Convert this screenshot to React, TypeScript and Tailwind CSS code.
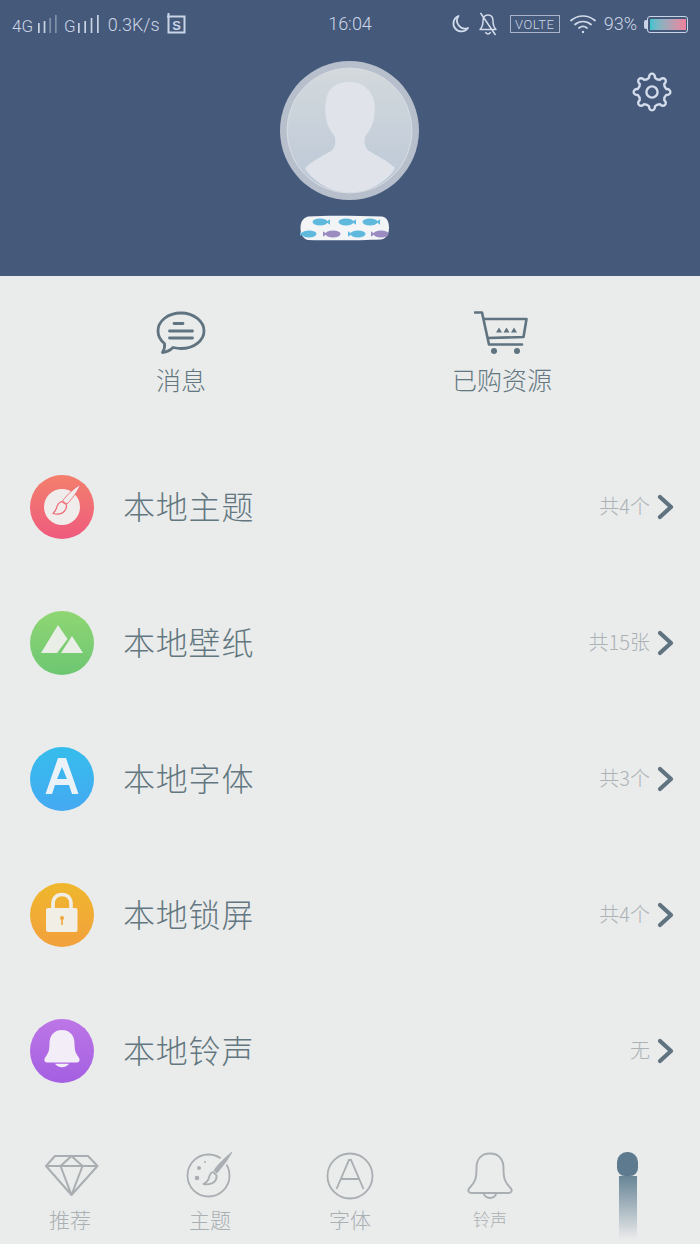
import type { ReactNode } from "react"

const CJK = "font-['Noto_Sans_CJK_SC','Noto_Sans',sans-serif]"

const LIST = [
  { name: "本地主题", count: "共4个", gradient: "bg-gradient-to-b from-[#f37f6b] to-[#ef5a7e]", icon: <BrushGlyph /> },
  { name: "本地壁纸", count: "共15张", gradient: "bg-gradient-to-b from-[#8fd673] to-[#6cc772]", icon: <MountainGlyph /> },
  { name: "本地字体", count: "共3个", gradient: "bg-gradient-to-b from-[#35bdeb] to-[#44a9f2]", icon: <LetterGlyph /> },
  { name: "本地锁屏", count: "共4个", gradient: "bg-gradient-to-b from-[#efb72c] to-[#f2a03c]", icon: <LockGlyph /> },
  { name: "本地铃声", count: "无", gradient: "bg-gradient-to-b from-[#bd76e6] to-[#a45fe2]", icon: <BellGlyph /> },
]

function gearPath(cx: number, cy: number, outer: number, inner: number, teeth: number) {
  const pts: string[] = []
  const step = (Math.PI * 2) / teeth
  for (let i = 0; i < teeth; i++) {
    const a = i * step - Math.PI / 2
    const p = (r: number, d: number) =>
      `${(cx + r * Math.cos(a + d * step)).toFixed(2)} ${(cy + r * Math.sin(a + d * step)).toFixed(2)}`
    pts.push(
      `${i === 0 ? "M" : "L"}${p(inner, -0.26)} C${p(outer + 1, -0.22)} ${p(outer + 1, 0.22)} ${p(inner, 0.26)} Q${p(inner - 1.6, 0.5)} ${p(inner, 0.74)}`
    )
  }
  return pts.join(" ") + " Z"
}

function Gear() {
  return (
    <svg width="40" height="40" viewBox="0 0 40 40" fill="none" stroke="#d3dcea" strokeWidth="2.4" strokeLinejoin="round">
      <path d={gearPath(20, 20, 19, 14.6, 8)} />
      <circle cx="20" cy="20" r="5.6" />
    </svg>
  )
}

function SignalBars({ dim, width }: { dim?: boolean; width: number }) {
  const heights = [10, 12, 15, 18]
  return (
    <svg width={width} height="18" viewBox={`0 0 ${width} 18`}>
      {heights.map((h, i) => (
        <rect key={i} x={i * ((width - 2) / 3)} y={18 - h} width="1.7" height={h} fill="#c9d3e2" opacity={dim && i > 1 ? 0.45 : 1} />
      ))}
    </svg>
  )
}

function StatusBar() {
  return (
    <div className="grid h-[48px] grid-cols-[1fr_auto_1fr] items-center pl-[12px] pr-[12px] text-[#cdd6e4] font-['Roboto',sans-serif] font-light">
      <div className="flex items-center">
        <span className="mt-[4px] text-[17px] leading-none">4G</span>
        <span className="ml-[5px]"><SignalBars dim width={19} /></span>
        <span className="ml-[7px] mt-[4px] text-[17px] leading-none">G</span>
        <span className="ml-[2px]"><SignalBars width={21} /></span>
        <span className="ml-[9px] mt-[2px] text-[18px] leading-none">0.3K/s</span>
        <svg className="ml-[7px] -mt-[2px]" width="19" height="21" viewBox="0 0 19 21" fill="none">
          <path d="M1.5 0v3M0 3.500h17.500v16H1.500V3.500" stroke="#c9d5e6" strokeWidth="2" />
          <text x="9.500" y="16.500" textAnchor="middle" fontSize="13" fontWeight="700" fontFamily="Liberation Sans, sans-serif" fill="#c9d5e6">S</text>
        </svg>
      </div>
      <span className="text-[18px] leading-none">16:04</span>
      <div className="flex items-center justify-end">
        <svg width="20" height="20" viewBox="0 0 20 20" fill="none" stroke="#d3dcea" strokeWidth="1.800">
          <path d="M8.500 2a8 8 0 1 0 9.500 12A8 8 0 0 1 8.500 2Z" strokeLinejoin="round" />
        </svg>
        <svg className="ml-[8px]" width="20" height="24" viewBox="0 0 20 24" fill="none" stroke="#d3dcea" strokeWidth="1.500">
          <path d="M10 3c-3.500 0-5 2.800-5 6 0 4-1 6.500-3 8.500h16c-2-2-3-4.500-3-8.500 0-3.200-1.500-6-5-6ZM7.500 20a2.600 2.600 0 0 0 5 0M2.500 1l15 22" strokeLinejoin="round" />
        </svg>
        <span className="ml-[12px] flex h-[18px] w-[50px] items-center justify-center border border-[#a9b6ca] text-[13px] leading-none tracking-[0.5px]">VOLTE</span>
        <svg className="ml-[10px]" width="26" height="20" viewBox="0 0 26 20" fill="none" stroke="#d3dcea" strokeWidth="1.700" strokeLinecap="round">
          <path d="M1 6.500c7-6 17-6 24 0M5 10.500c4.600-4 11.400-4 16 0M9 14c2.500-2 5.500-2 8 0" />
          <circle cx="13" cy="18" r="1.200" fill="#d3dcea" stroke="none" />
        </svg>
        <span className="ml-[8px] text-[18px] leading-none">93%</span>
        <span className="ml-[7px] h-[9px] w-[3px] rounded-l-[2px] bg-[#c9d5e6]" />
        <span className="flex h-[17px] w-[41px] rounded-[3px] border border-[#c9d5e6] bg-gradient-to-r from-[#1cc5cf] via-[#a9a5b8] to-[#f47b98] bg-clip-content p-[1.500px]" />
      </div>
    </div>
  )
}

function Avatar() {
  return (
    <svg width="139" height="139" viewBox="0 0 139 139">
      <defs>
        <linearGradient id="face" x1="0" y1="0" x2="0" y2="1">
          <stop offset="0" stopColor="#d3d9dc" />
          <stop offset="1" stopColor="#bcc8d8" />
        </linearGradient>
        <clipPath id="inner">
          <circle cx="69.500" cy="69.500" r="62" />
        </clipPath>
      </defs>
      <circle cx="69.500" cy="69.500" r="69.500" fill="#b8bfcc" />
      <circle cx="69.500" cy="69.500" r="62.500" fill="url(#face)" stroke="#d9dde2" strokeWidth="1" />
      <path
        clipPath="url(#inner)"
        d="M69 21C56 21 47 28 46 40c-1 6-1 12 0 17 1 8 6 14 9 19 1 6 0 11-4 14-8 5-18 9-26 17 5 10 24 25 45 25s40-15 45-25c-8-8-18-12-26-17-4-3-5-8-4-14 3-5 8-11 9-19 1-5 1-11 0-17C91 28 82 21 69 21Z"
        fill="#e0e4ea"
      />
    </svg>
  )
}

function Fish({ x, y, color, flip }: { x: number; y: number; color: string; flip?: boolean }) {
  return (
    <g transform={`translate(${x} ${y}) scale(${flip ? -1 : 1} 1)`} fill={color}>
      <ellipse cx="0" cy="0" rx="7.500" ry="3.400" />
      <path d="M6 0l4-2.800v5.600Z" />
    </g>
  )
}

function NicknameMask() {
  return (
    <svg width="90" height="26" viewBox="0 0 90 26">
      <path d="M8 1.500C30 0 60 1 82 1.500c5 1 7 5 7 11 0 6-2 11-8 12-20 1-54 1-73 .500-5-1-7.500-6-7.500-12S3 3 8 1.500Z" fill="#f2f4f5" />
      <Fish x={20} y={7} color="#5fb9dc" />
      <Fish x={46} y={7} color="#5fb9dc" />
      <Fish x={70} y={7} color="#5fb9dc" />
      <Fish x={9} y={19} color="#5fb9dc" flip />
      <Fish x={33} y={19} color="#9a8cc0" flip />
      <Fish x={58} y={19} color="#5fb9dc" flip />
      <Fish x={81} y={19} color="#9a8cc0" flip />
    </svg>
  )
}

function ProfileHeader() {
  return (
    <header className="h-[276px] shrink-0 bg-[#45597b]">
      <StatusBar />
      <div className="grid grid-cols-[1fr_auto_1fr]">
        <div />
        <div className="mr-[1px] mt-[13px] flex flex-col items-center">
          <Avatar />
          <div className="mr-[10px] mt-[15px]"><NicknameMask /></div>
        </div>
        <div className="flex justify-end pr-[28px] pt-[24px]">
          <div><Gear /></div>
        </div>
      </div>
    </header>
  )
}

function MessageIcon() {
  return (
    <svg width="50" height="44" viewBox="0 0 50 44" fill="none" stroke="#5f7480" strokeWidth="2.800" strokeLinecap="round" strokeLinejoin="round">
      <path d="M25 2C12 2 2 10 2 20c0 5 2 9 6.500 12.500.5 3-.5 6.500-2 9 4-.5 8-2.500 10.500-5 2.500.5 5 1 8 1 13 0 23-8 23-17.500S38 2 25 2Z" />
      <path d="M18 12.500h9M13.500 20h23M13.500 27h23" />
    </svg>
  )
}

function CartIcon() {
  return (
    <svg className="mr-[3px]" width="54" height="44" viewBox="0 0 54 44" fill="none" stroke="#5f7480" strokeWidth="2.600" strokeLinejoin="round">
      <path d="M1 1.500h7l7 32h33" strokeLinecap="round" />
      <path d="M10 8h42.500l-3 18-36 1" />
      <circle cx="20" cy="40" r="3" fill="#5f7480" stroke="none" />
      <circle cx="43" cy="40" r="3" fill="#5f7480" stroke="none" />
      <path d="M22 21.500l3-5 3 5ZM29.500 21.500l3-5 3 5ZM37 21.500l3-5 3 5Z" fill="#5f7480" stroke="none" />
    </svg>
  )
}

function QuickAction({ icon, label, className }: { icon: ReactNode; label: string; className: string }) {
  return (
    <div className={`flex flex-col items-center ${className}`}>
      <div className="flex h-[44px] items-end">{icon}</div>
      <span className="mt-[9px] text-[25px] font-light leading-[30px] text-[#62777f]">{label}</span>
    </div>
  )
}

function BrushGlyph() {
  return (
    <svg width="64" height="64" viewBox="0 0 64 64">
      <circle cx="32" cy="32" r="18" fill="#f1ecec" />
      <path d="M50.500 9.500C48 16 42 24 37 29l-4.500-3C37 20 44 13 50.500 9.500Z" fill="#f1ecec" stroke="#ee6b74" strokeWidth="0.900" strokeLinejoin="round" />
      <path d="M31.500 26.500c-3 1.500-4.500 4-5 6.500-.5 2-2 4-3.500 5.500 4 1 9 .5 11.500-2.500 1.800-2 2.300-4 1.800-6.500Z" fill="#f1ecec" stroke="#ee6b74" strokeWidth="1.200" strokeLinejoin="round" />
    </svg>
  )
}

function MountainGlyph() {
  return (
    <svg width="64" height="64" viewBox="0 0 64 64" fill="#e9efe6">
      <path d="M11 42 28 14l9.500 14L27 42ZM31 42l11-17 11 17Z" />
    </svg>
  )
}

function LetterGlyph() {
  return (
    <svg width="64" height="64" viewBox="0 0 64 64" fill="#eaf2f8">
      <path fillRule="evenodd" d="M28 11h8l12.500 36h-6.500l-3-9H25l-3 9h-6.500ZM32 20 27 32h10Z" />
    </svg>
  )
}

function LockGlyph() {
  return (
    <svg width="64" height="64" viewBox="0 0 64 64">
      <path d="M23 27V21c0-6 3.500-9.500 9-9.500s9 3.500 9 9.500v6" fill="none" stroke="#f1eee6" strokeWidth="3.600" />
      <rect x="16" y="25" width="31.500" height="24" rx="2" fill="#f1eee6" />
      <circle cx="32" cy="35" r="2" fill="#efa838" />
      <rect x="31.200" y="35" width="1.600" height="7" fill="#efa838" />
    </svg>
  )
}

function BellGlyph() {
  return (
    <svg width="64" height="64" viewBox="0 0 64 64" fill="#f3edf8">
      <path d="M32 11c-8.500 0-12.500 6.500-12.500 13 0 7-1 10-4 14-2 2.500-1 5.500 1.500 5.500h30c2.500 0 3.500-3 1.500-5.500-3-4-4-7-4-14 0-6.500-4-13-12.500-13Z" />
      <path d="M25 44.800h14c-1.500 2.300-4 3.400-7 3.400s-5.500-1.100-7-3.400Z" />
    </svg>
  )
}

function ListRow({ row }: { row: (typeof LIST)[number] }) {
  return (
    <div className="flex h-[136px] items-center pl-[30px] pr-[25px]">
      <div className={`flex h-[64px] w-[64px] shrink-0 items-center justify-center rounded-full ${row.gradient}`}>
        {row.icon}
      </div>
      <span className="-mt-[4px] ml-[30px] -translate-x-[1px] text-[32px] font-light leading-none tracking-[0.8px] text-[#62777f]">{row.name}</span>
      <span className="-mt-[2px] ml-auto text-[20px] font-light leading-none text-[#aab2b6]">{row.count}</span>
      <svg className="ml-[7px]" width="18" height="26" viewBox="0 0 18 26" fill="none" stroke="#5f7480" strokeWidth="4.200" strokeLinecap="round" strokeLinejoin="round">
        <path d="M3 3l11 10L3 23" />
      </svg>
    </div>
  )
}

function DiamondIcon() {
  return (
    <svg className="ml-[3px]" width="54" height="42" viewBox="0 0 54 42" fill="none" stroke="#a8aeb1" strokeWidth="2" strokeLinejoin="round">
      <path d="M10 1h33l9.500 10L26.500 40 1 11ZM1 11h51.500M15.500 11l11-10 11 10M15.500 11l11 29 11-29" />
    </svg>
  )
}

function PaletteIcon() {
  return (
    <svg width="48" height="50" viewBox="0 0 48 50" fill="none" stroke="#a8aeb1" strokeWidth="1.800" strokeLinejoin="round">
      <circle cx="22.500" cy="24.500" r="21" />
      <path d="M46 1c-3 6-9 14-15 21l-4.500-3C31 12 39 6 46 1Z" fill="#eaebeb" stroke="#eaebeb" strokeWidth="4" />
      <path d="M46 1c-3 6-9 14-15 21l-3-2.500C32 13 40 6 46 1Z" fill="#a8aeb1" stroke="#a8aeb1" strokeWidth="0.800" />
      <path d="M27 21c-3 1-3.500 3.500-4 5.500-.5 2-2.500 5-5.500 6.500 4.500 1 10 0 12-3.500 1.300-2.200 1.500-4 .5-6Z" fill="#eaebeb" stroke="#a8aeb1" strokeWidth="1.800" />
      <circle cx="11" cy="27" r="2.300" fill="#a8aeb1" stroke="none" />
      <circle cx="13" cy="17" r="2" fill="#a8aeb1" stroke="none" />
      <circle cx="19" cy="11" r="1" fill="#a8aeb1" stroke="none" />
    </svg>
  )
}

function FontIcon() {
  return (
    <svg width="48" height="48" viewBox="0 0 48 48" fill="none" stroke="#a8aeb1" strokeWidth="1.800">
      <circle cx="24" cy="24" r="22.500" />
      <path d="M10.500 37 23 8h2l12.500 29M15.500 27h17" />
    </svg>
  )
}

function RingIcon() {
  return (
    <svg width="46" height="48" viewBox="0 0 46 48" fill="none" stroke="#a8aeb1" strokeWidth="1.900" strokeLinejoin="round">
      <path d="M23 1.500c-9 0-13.500 6-13.500 14.500 0 10-1 14-7 20-2 2-1.500 5 2 5h37c3.500 0 4-3 2-5-6-6-7-10-7-20C36.500 7.500 32 1.500 23 1.500Z" />
      <path d="M16.500 41c1 3 3.500 5 6.500 5s5.500-2 6.500-5" />
    </svg>
  )
}

function TabItem({ icon, label, labelClass }: { icon: ReactNode; label: string; labelClass: string }) {
  return (
    <div className="flex w-[140px] flex-col items-center">
      <div className="flex h-[50px] items-center justify-center">{icon}</div>
      <span className={`mt-[3px] font-light leading-[30px] text-[#a9b0b3] ${labelClass}`}>{label}</span>
    </div>
  )
}

function ActiveIndicator() {
  return (
    <div className="flex w-[140px] flex-col items-center pr-[5px]">
      <div className="mt-[1px] h-[24px] w-[21px] rounded-t-[10px] rounded-b-[8px] bg-[#5d7a8f]" />
      <div className="h-[64px] w-[18px] bg-gradient-to-b from-[#688596] to-[#eaebeb] blur-[0.6px]" />
    </div>
  )
}

export default function App() {
  return (
    <div className={`flex h-[1244px] w-[700px] flex-col overflow-hidden bg-[#eaebeb] ${CJK}`}>
      <ProfileHeader />

      <div className="flex h-[131px] shrink-0 items-start pt-[35px]">
        <QuickAction icon={<MessageIcon />} label="消息" className="ml-[131px] w-[100px]" />
        <QuickAction icon={<CartIcon />} label="已购资源" className="ml-[221px] w-[100px]" />
      </div>

      <main className="mt-[32px] flex flex-col">
        {LIST.map((row) => (
          <ListRow key={row.name} row={row} />
        ))}
      </main>

      <nav className="mt-auto flex h-[93px] shrink-0 pb-[5px]">
        <TabItem icon={<DiamondIcon />} label="推荐" labelClass="text-[21px]" />
        <TabItem icon={<PaletteIcon />} label="主题" labelClass="text-[21px]" />
        <TabItem icon={<FontIcon />} label="字体" labelClass="text-[21px]" />
        <TabItem icon={<RingIcon />} label="铃声" labelClass="text-[17px]" />
        <ActiveIndicator />
      </nav>
    </div>
  )
}
